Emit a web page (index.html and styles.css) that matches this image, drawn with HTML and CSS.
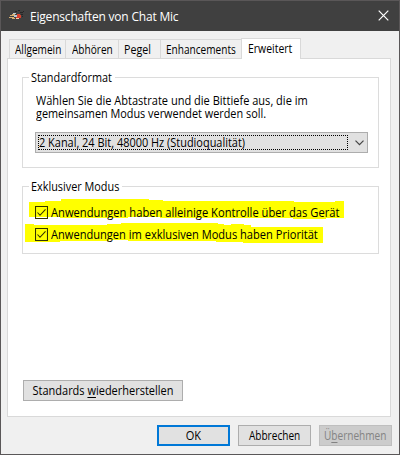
FILE: index.html
```html
<!DOCTYPE html>
<html lang="de">
<head>
<meta charset="utf-8">
<title>Eigenschaften von Chat Mic</title>
<link rel="stylesheet" href="styles.css">
</head>
<body>
<div class="window">
  <header class="titlebar">
    <svg class="app-icon" width="16" height="12" viewBox="0 0 16 12" shape-rendering="crispEdges"><path fill="#252525" d="M6 1h2v1H6zM9 0h2v1H9zM11 2h3v1h-3zM12 4h2v1h-2zM14 1h1v1h-1zM13 6h1v1h-1z"/><path fill="#d6ad70" d="M3 4h3v1H3zM1 5h4v1H1zM0 7h5v1H0zM3 8h3v1H3z"/><path fill="#b9c9d2" d="M4 3h3v1H4zM5 5h3v2H5z"/><path fill="#d8402c" d="M8 4h3v1H8zM8 5h4v2H8zM7 7h5v1H7z"/><path fill="#f2c7a6" d="M7 8h3v1H7z"/></svg>
    <h1 class="title">Eigenschaften von Chat Mic</h1>
    <svg class="close" width="11" height="11" viewBox="0 0 11 11"><path d="M.7.7l9.6 9.6M10.3.7L.7 10.3"/></svg>
  </header>
  <nav class="tabs">
    <div class="tab t1"><span>Allgemein</span></div>
    <div class="tab t2"><span>Abhören</span></div>
    <div class="tab t3"><span>Pegel</span></div>
    <div class="tab t4"><span>Enhancements</span></div>
    <div class="tab active"><span>Erweitert</span></div>
  </nav>
  <main class="panel">
    <section class="group format">
      <h2 class="legend l1"><span>Standardformat</span></h2>
      <p class="line p1"><span>Wählen Sie die Abtastrate und die Bittiefe aus, die im</span></p>
      <p class="line p2"><span>gemeinsamen Modus verwendet werden soll.</span></p>
      <div class="select">
        <div class="focus"><span>2 Kanal, 24 Bit, 48000 Hz (Studioqualität)</span></div>
        <svg class="chevron" width="9" height="6" viewBox="0 0 9 6"><path d="M.5.7l4 4 4-4"/></svg>
      </div>
    </section>
    <section class="group exclusive">
      <h2 class="legend l2"><span>Exklusiver Modus</span></h2>
      <svg class="marker" width="330" height="54" viewBox="22 194 330 54" shape-rendering="crispEdges"><path d="M29 202H45V201H61V199H149V200H163V201H294V202H335V201H344V218H326V219H293V218H160V217H128V218H60V217H29zM25 224H34V225H107V224H121V223H218V224H224V225H231V224H244V225H251V227H323V243H243V242H216V241H128V240H109V241H60V242H25z"/></svg>
      <div class="check c1"><svg class="box" width="13" height="13" viewBox="0 0 13 13"><path d="M.5.5h12v12H.5zM2.5 6.5L5 9.3l5.5-6"/></svg><span>Anwendungen haben alleinige Kontrolle über das Gerät</span></div>
      <div class="check c2"><svg class="box" width="13" height="13" viewBox="0 0 13 13"><path d="M.5.5h12v12H.5zM2.5 6.5L5 9.3l5.5-6"/></svg><span>Anwendungen im exklusiven Modus haben Priorität</span></div>
    </section>
    <div class="button restore"><span>Standards <u>w</u>iederherstellen</span></div>
  </main>
  <footer class="actions">
    <div class="button ok"><span>OK</span></div>
    <div class="button cancel"><span>Abbrechen</span></div>
    <div class="button disabled"><span>Ü<u>b</u>ernehmen</span></div>
  </footer>
</div>
</body>
</html>
```
FILE: styles.css
```css
* { box-sizing: border-box; }
body { margin: 0; font: 12px/15px "Open Sans", "Noto Sans", sans-serif; color: #000; }
h1, h2, p { margin: 0; font: inherit; }
span, h1, h2, p { white-space: nowrap; }
span { display: inline-block; transform: scaleX(.92); transform-origin: left; }
.window { width: 400px; height: 455px; background: #f0f0f0; border: 1px solid #5a5758; display: flex; flex-direction: column; }
.titlebar { height: 30px; background: #404040; color: #fff; display: flex; align-items: center; padding: 0 10px 0 8px; }
.app-icon { margin-right: 5px; }
.title { flex: 1; letter-spacing: -.2px; }
.close { fill: none; stroke: #fff; stroke-width: 1.2; position: relative; top: -1px; }
.tabs { height: 28px; display: flex; align-items: flex-end; padding-left: 8px; z-index: 1; margin-bottom: -1px; }
.tab { height: 19px; border: 1px solid #d9d9d9; border-right: 0; border-bottom: 0; padding: 2px 0 0 5px; margin-bottom: 1px; }
.tab span { transform: scaleX(.84); }
.t1 { width: 56px; }
.t2 { width: 53px; padding-left: 6px; }
.t3 { width: 42px; padding-left: 5px; }
.t3 span { transform: scaleX(.89); }
.t4 { width: 81px; padding-left: 5px; }
.active { width: 60px; height: 21px; background: #fff; border-right: 1px solid #d9d9d9; padding-left: 6px; margin-bottom: 0; }
.tab.active span { transform: scaleX(.87); }
.panel { height: 359px; width: 384px; margin-left: 6px; background: #fff; border: 1px solid #d9d9d9; padding: 18px 0 0 14px; }
.group { width: 357px; border: 1px solid #dcdcdc; }
.legend { width: 86px; background: #fff; padding: 0 2px; margin: -8px 0 0 6px; line-height: 15px; }
.l2 { width: 93px; }
.legend span { transform: scaleX(.905); }
.format { height: 91px; }
.line { margin-left: 13px; height: 13px; line-height: 13px; }
.p1 { margin-top: 9px; }
.p2 span { transform: scaleX(.906); }
.select { width: 333px; height: 21px; margin: 12px 0 0 12px; background: #e1e1e1; border: 1px solid #adadad; display: flex; align-items: center; padding-left: 2px; }
.focus { width: 310px; height: 15px; border: 1px dotted #000; line-height: 13px; }
.focus span { transform: scaleX(.912); }
.chevron { margin-left: 7px; fill: none; stroke: #444; stroke-width: 1.2; }
.exclusive { height: 68px; margin-top: 18px; position: relative; }
.marker { position: absolute; left: -1px; top: 7px; fill: #ff0; }
.check { position: relative; display: flex; align-items: center; height: 15px; margin-left: 12px; }
.check span { transform: scaleX(.931); }
.c2 span { transform: scaleX(.924); }
.c1 { margin-top: 11px; }
.c2 { margin-top: 7px; }
.box { fill: none; stroke: #333300; stroke-width: 1.1; margin-right: 3px; }
.button { width: 73px; height: 21px; background: #e1e1e1; border: 1px solid #adadad; display: flex; justify-content: center; align-items: center; }
.button span { transform: scaleX(.84); transform-origin: center; }
u { text-underline-offset: 2px; }
.restore { width: 160px; margin: 126px 0 0 1px; }
.restore span { transform: scaleX(.915); }
.actions { display: flex; gap: 8px; justify-content: flex-end; padding: 8px 7px 0 0; }
.ok { border: 2px solid #0078d7; }
.ok span { transform: scaleX(.92); }
.disabled { background: #ccc; border-color: #bfbfbf; color: #838383; }
```
